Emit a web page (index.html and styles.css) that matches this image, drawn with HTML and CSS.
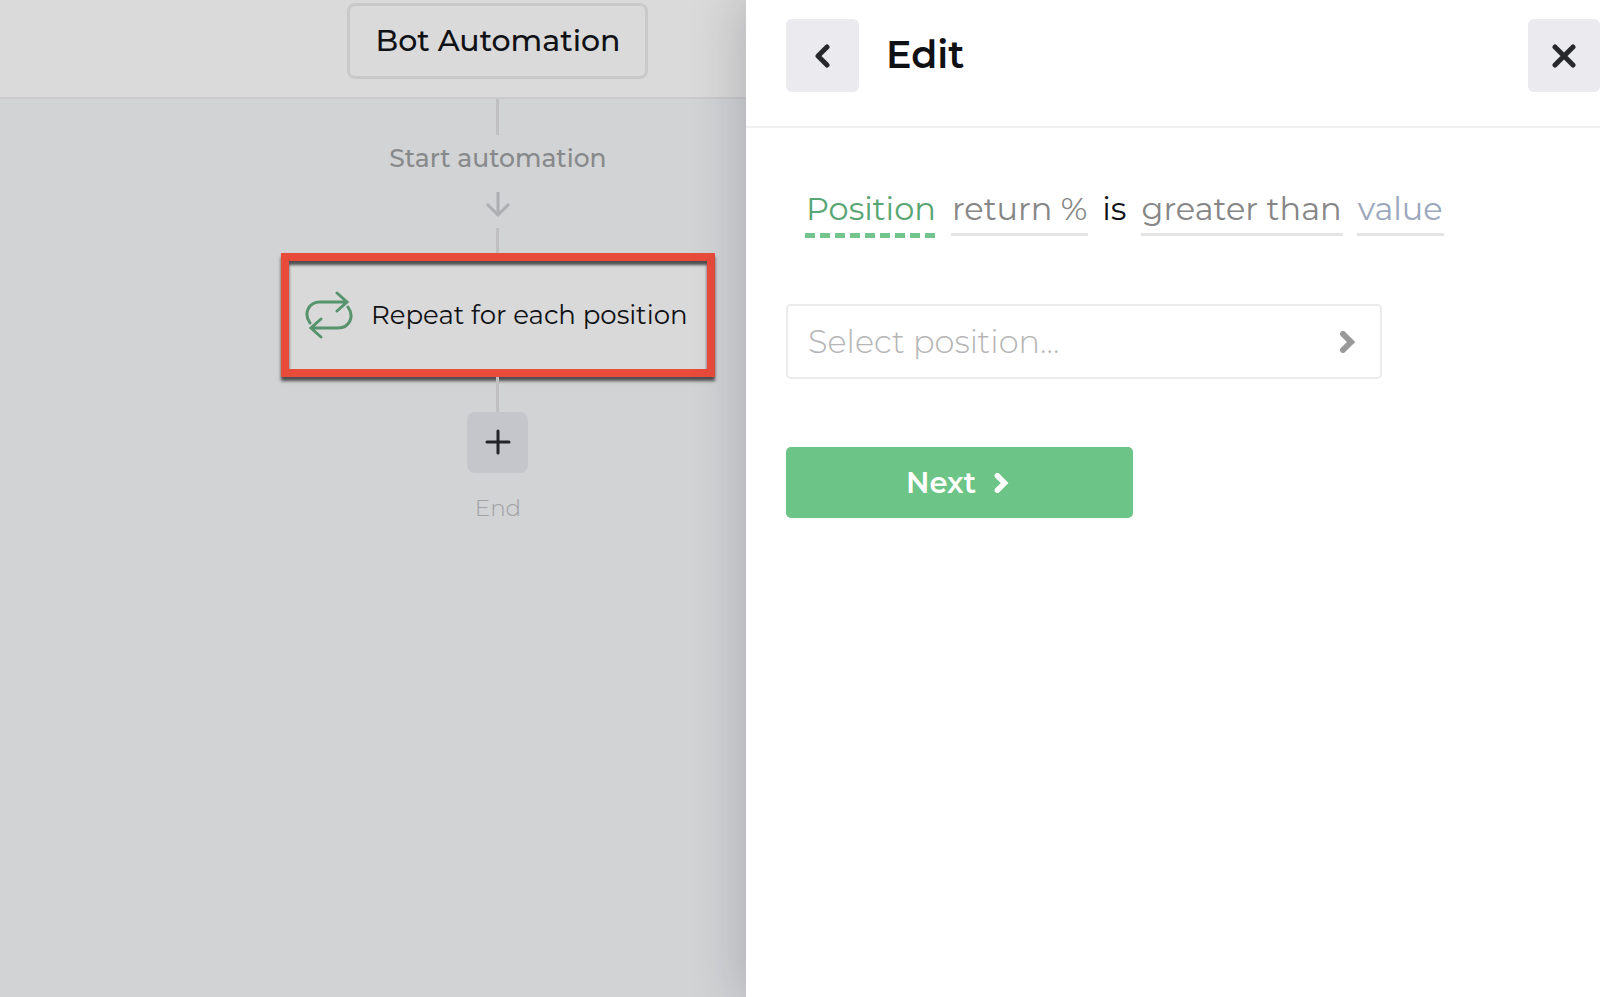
FILE: index.html
```html
<!DOCTYPE html>
<html lang="en">
<head>
<meta charset="utf-8">
<meta name="viewport" content="width=device-width, initial-scale=1">
<title>Bot Automation</title>
<link rel="stylesheet" href="styles.css">
</head>
<body>
<div class="app">
  <main class="workspace">
    <header class="topbar">
      <button class="bot-name" type="button">Bot Automation</button>
    </header>
    <div class="flow">
      <span class="line line-start"></span>
      <p class="flow-label">Start automation</p>
      <svg class="flow-arrow" viewBox="0 0 26 28" aria-hidden="true"><path d="M13 2v23M2 14l11 11 11-11"/></svg>
      <span class="line line-mid"></span>
      <button class="step" type="button">
        <svg class="step-icon" viewBox="0 0 48 48" aria-hidden="true"><path d="M5 32C-2 22 4 11 15 11H41M32 2l10 9-10 9M43 16C50 26 44 37 33 37H7M16 28L6 37l10 9"/></svg>
        <span>Repeat for each position</span>
      </button>
      <span class="line line-end"></span>
      <button class="add" type="button" aria-label="Add step">
        <svg viewBox="0 0 26 26" aria-hidden="true"><path d="M13 2v22M2 13h22"/></svg>
      </button>
      <p class="end-label">End</p>
    </div>
  </main>
  <aside class="panel">
    <header class="panel-head">
      <button class="square back" type="button" aria-label="Back">
        <svg viewBox="0 0 16 24" aria-hidden="true"><path d="M12 3L3 12l9 9"/></svg>
      </button>
      <h1 class="title">Edit</h1>
      <button class="square close" type="button" aria-label="Close">
        <svg viewBox="0 0 24 24" aria-hidden="true"><path d="M3 3l18 18M21 3L3 21"/></svg>
      </button>
    </header>
    <div class="panel-body">
      <div class="sentence">
        <button class="word word-active" type="button">Position</button>
        <button class="word" type="button">return %</button>
        <span class="plain">is</span>
        <button class="word" type="button">greater than</button>
        <button class="word word-value" type="button">value</button>
      </div>
      <button class="picker" type="button">
        <span>Select position...</span>
        <svg viewBox="0 0 16 22" aria-hidden="true"><path d="M4 3l8 8-8 8"/></svg>
      </button>
      <button class="next" type="button">
        <span>Next</span>
        <svg viewBox="0 0 16 22" aria-hidden="true"><path d="M4 3l8 8-8 8"/></svg>
      </button>
    </div>
  </aside>
</div>
</body>
</html>
```
FILE: styles.css
```css
* { box-sizing: border-box; }
body { margin: 0; font-family: Montserrat, Inter, "Open Sans", sans-serif; color: #101114; }
button { font: inherit; color: inherit; margin: 0; padding: 0; border: 0; background: none; cursor: pointer; }
p, h1 { margin: 0; }
svg { display: block; fill: none; flex: none; }

.app { display: grid; grid-template-columns: 746fr 854fr; min-height: 100vh; overflow: hidden; }

.workspace { display: flex; flex-direction: column; background: #d2d3d5; }
.topbar {
  display: flex; justify-content: center; height: 99px; padding: 3px 0 0 33.5%;
  background: #dadada; border-bottom: 2px solid #cacacc;
}
.bot-name {
  width: 301px; height: 76px; padding-bottom: 2px; border: 3px solid #c9c9c9; border-radius: 8px;
  font-size: 30px; font-weight: 500; white-space: nowrap;
}
.flow { display: flex; flex-direction: column; align-items: center; padding-left: 33.5%; }
.line { width: 3px; background: #c0c0c3; }
.line-start { height: 36px; }
.line-mid { height: 25px; margin-top: 10px; }
.line-end { height: 35px; }
.flow-label { margin-top: 7px; font-size: 25px; line-height: 32px; font-weight: 500; color: #88898b; white-space: nowrap; }
.flow-arrow { width: 26px; height: 28px; margin-top: 16px; stroke: #adaeb1; stroke-width: 3; }
.step {
  display: flex; align-items: center; gap: 18px; width: 434px; height: 124px; padding: 0 16px;
  border: 8px solid #e94b3b; background: #d9d9d9; font-size: 26px; white-space: nowrap; text-align: left;
  box-shadow: 0 4px 3px #4e4e50, inset 0 4px 3px #4e4e50;
}
.step-icon { width: 48px; height: 48px; stroke: #57946d; stroke-width: 3; stroke-linecap: round; }
.add { display: grid; place-items: center; width: 61px; height: 61px; padding-bottom: 2px; border-radius: 8px; background: #c5c6cb; }
.add svg { width: 26px; height: 26px; stroke: #222429; stroke-width: 3; stroke-linecap: round; }
.end-label { margin-top: 20px; font-size: 23px; line-height: 30px; font-weight: 300; color: #a1a1a4; }

.panel { position: relative; background: #fff; box-shadow: 0 0 50px 4px rgba(20, 20, 35, 0.2); }
.panel-head { display: flex; align-items: center; height: 128px; padding: 0 0 15px 40px; border-bottom: 2px solid #f0f0f1; }
.square { display: grid; place-items: center; width: 73px; height: 73px; border-radius: 6px; background: #ebebef; }
.square svg { height: 24px; stroke: #26282c; stroke-width: 5; stroke-linecap: round; stroke-linejoin: round; }
.title { margin-left: 27px; padding-bottom: 2px; font-size: 38px; line-height: 46px; font-weight: 600; }
.close { width: 72px; margin-left: auto; }

.panel-body { display: flex; flex-direction: column; align-items: flex-start; padding: 60px 40px; }
.sentence { display: flex; align-items: flex-start; gap: 14px; margin-left: 19px; font-size: 32px; line-height: 42px; white-space: nowrap; }
.word { height: 48px; padding: 0 1px 3px; border-bottom: 3px solid #e4e4e4; color: #868686; }
.word-active {
  height: 50px; padding-bottom: 8px; border: 0; color: #58a673;
  background: repeating-linear-gradient(90deg, #74c48d 0 10px, transparent 10px 15px) bottom / 100% 5px no-repeat;
}
.word-value { color: #9ba8bd; }
.picker {
  display: flex; align-items: center; justify-content: space-between; width: 596px; max-width: 100%; height: 75px;
  margin-top: 66px; padding: 0 25px 0 20px; border: 2px solid #ebebeb; border-radius: 5px;
  font-size: 32px; font-weight: 300; color: #b5b5b5;
}
.picker svg { width: 16px; height: 22px; stroke: #999; stroke-width: 6; stroke-linecap: round; }
.next {
  display: flex; align-items: center; justify-content: center; gap: 17px; width: 347px; height: 71px; margin-top: 68px;
  padding-right: 4px; border-radius: 5px; background: #6cc486; color: #fff; font-size: 29px; font-weight: 600;
}
.next svg { width: 16px; height: 20px; stroke: #fff; stroke-width: 6; stroke-linecap: round; }
```
